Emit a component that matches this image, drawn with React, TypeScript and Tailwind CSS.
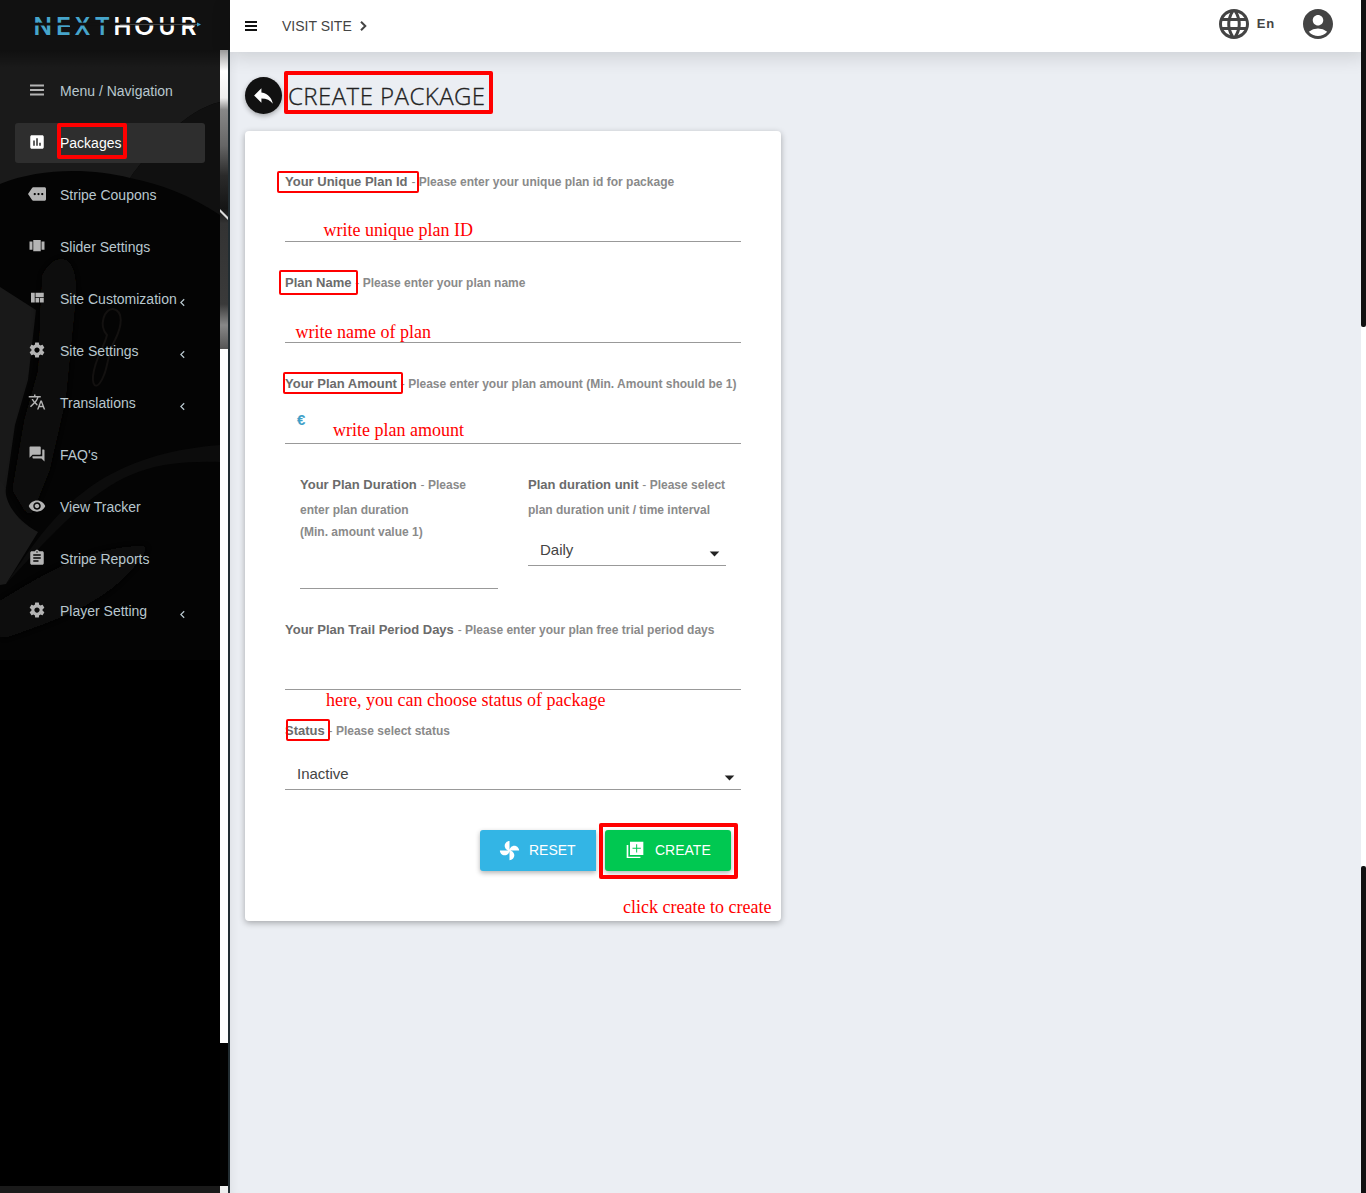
import React from "react";
import {
  MdAssessment, MdMore, MdTranslate, MdForum, MdVisibility, MdAssignment,
  MdLanguage, MdAccountCircle, MdReply, MdChevronLeft, MdArrowDropDown,
} from "react-icons/md";

type IconType = React.ComponentType<{ className?: string }>;

function glyph(d: string): IconType {
  return function Glyph({ className }) {
    return (
      <svg viewBox="0 0 24 24" fill="currentColor" className={className}>
        <path d={d} />
      </svg>
    );
  };
}

const Quilt = glyph("M10 18h5v-6h-5v6zm-6 0h5V5H4v13zm12 0h5v-6h-5v6zM10 5v6h11V5H10z");
const Carousel = glyph("M7 19h10V4H7v15zm-5-2h4V6H2v11zM18 6v11h4V6h-4z");
const Bars = glyph("M2.7 4.700h18.6v2.700H2.7zM2.7 10.700h18.6v2.700H2.7zM2.7 16.700h18.6v2.700H2.7z");
const Fan = glyph(
  "M12 12c0-3 2.5-5.5 5.5-5.5S23 9 23 12H12zm0 0c0 3-2.5 5.5-5.5 5.5S1 15 1 12h11zm0 0c-3 0-5.5-2.5-5.5-5.5S9 1 12 1v11zm0 0c3 0 5.5 2.5 5.5 5.5S15 23 12 23V12z"
);
const AddBox = glyph(
  "M4 6H2v15.500h16.500V20H4V6zM22 2H6v16h16V2zM19 10.600h-4.400V15h-1.200v-4.400H9V9.400h4.400V5h1.200v4.400H19z"
);
const Gear = glyph(
  "M19.430 12.980c.04-.32.07-.64.07-.98s-.03-.66-.07-.98l2.110-1.650c.19-.15.24-.42.12-.64l-2-3.460c-.12-.22-.39-.3-.61-.22l-2.490 1c-.52-.4-1.080-.73-1.690-.98l-.38-2.650C14.460 2.180 14.250 2 14 2h-4c-.25 0-.46.18-.49.42l-.38 2.650c-.61.25-1.170.59-1.690.98l-2.490-1c-.23-.09-.49 0-.61.22l-2 3.460c-.13.22-.07.49.12.64l2.110 1.650c-.04.32-.07.65-.07.98s.03.66.07.98l-2.110 1.650c-.19.15-.24.42-.12.64l2 3.460c.12.22.39.3.61.22l2.490-1c.52.4 1.080.73 1.690.98l.38 2.650c.03.24.24.42.49.42h4c.25 0 .46-.18.49-.42l.38-2.650c.61-.25 1.170-.59 1.690-.98l2.490 1c.23.09.49 0 .61-.22l2-3.460c.12-.22.07-.49-.12-.64l-2.110-1.650zM12 15.500c-1.930 0-3.500-1.570-3.500-3.500s1.570-3.500 3.500-3.500 3.500 1.570 3.500 3.500-1.570 3.500-3.500 3.500z"
);

const items: { label: string; icon: IconType; arrow?: boolean; active?: boolean }[] = [
  { label: "Menu / Navigation", icon: Bars },
  { label: "Packages", icon: MdAssessment, active: true },
  { label: "Stripe Coupons", icon: MdMore },
  { label: "Slider Settings", icon: Carousel },
  { label: "Site Customization", icon: Quilt, arrow: true },
  { label: "Site Settings", icon: Gear, arrow: true },
  { label: "Translations", icon: MdTranslate, arrow: true },
  { label: "FAQ's", icon: MdForum },
  { label: "View Tracker", icon: MdVisibility },
  { label: "Stripe Reports", icon: MdAssignment },
  { label: "Player Setting", icon: Gear, arrow: true },
];

function Logo() {
  const letters: [string, number, number][] = [
    ["N", 33.5, 18.5], ["E", 56, 15], ["X", 74.5, 16], ["T", 94.5, 15.5],
    ["H", 113.5, 18], ["O", 134, 20.5], ["U", 158.5, 17], ["R", 180.5, 16],
  ];
  return (
    <svg width="230" height="50" viewBox="0 0 230 50" className="block">
      <g fontFamily="Inter" fontWeight="600" fontSize="24.5">
        {letters.map(([c, x, w], i) => (
          <text key={c} x={x} y="34.7" textLength={w} lengthAdjust="spacingAndGlyphs" fill={i < 4 ? "#46a5cb" : "#fff"}>{c}</text>
        ))}
      </g>
      <rect x="30" y="22.700" width="168" height="2.800" fill="#111" />
      <rect x="120" y="24" width="77" height="1" fill="#444" />
      <rect x="59" y="25.500" width="11" height="1.500" fill="#46a5cb" />
      <rect x="116" y="25.500" width="13" height="2" fill="#fff" />
      <rect x="183" y="25.500" width="10" height="2" fill="#fff" />
      <path d="M197 22.500l4 2-4 2z" fill="#40a0c8" />
    </svg>
  );
}

function SidebarPhoto() {
  return (
    <svg width="228" height="1143" viewBox="0 50 228 1143" className="absolute inset-0">
      <defs>
        <linearGradient id="shade" x1="0" y1="0" x2="0" y2="1">
          <stop offset="0" stopColor="#000" stopOpacity=".4" />
          <stop offset="1" stopColor="#000" stopOpacity="0" />
        </linearGradient>
        <linearGradient id="strip" x1="0" y1="0" x2="0" y2="1">
          <stop offset="0" stopColor="#999" />
          <stop offset=".07" stopColor="#fff" />
          <stop offset=".16" stopColor="#eee" />
          <stop offset=".2" stopColor="#888" />
          <stop offset=".32" stopColor="#666" />
          <stop offset=".42" stopColor="#2a2a2a" />
          <stop offset=".53" stopColor="#151515" />
          <stop offset=".58" stopColor="#333" />
          <stop offset=".85" stopColor="#3a3a3a" />
          <stop offset=".92" stopColor="#888" />
          <stop offset="1" stopColor="#555" />
        </linearGradient>
        <filter id="soft"><feGaussianBlur stdDeviation="5" /></filter>
      </defs>
      <rect y="50" width="220" height="1143" fill="#1a1a1a" />
      <path d="M0 184C40 168 90 168 130 178C150 150 185 110 220 102V1186H0V585L6 584L38 532C15 520 4 500 6 488L0 470Z" fill="#040404" />
      <path d="M130 178C150 150 185 110 220 102V215C190 195 160 184 130 178Z" fill="#101010" />
      <path d="M0 287L36 310L28 380L15 425L6 488L0 480Z" fill="#191919" />
      <g filter="url(#soft)">
        <path d="M42 275C55 250 80 250 76 300L66 400L50 470L30 520L12 490L24 420L38 370L40 310Z" fill="#0a0908" />
        <path d="M0 600C50 570 90 545 150 545C120 600 60 620 0 640Z" fill="#070707" />
      </g>
      <path d="M6 584C50 520 90 455 220 445V462C130 460 100 480 6 584Z" fill="#0c0c0c" />
      <path d="M107 335C98 325 105 308 113 309C124 311 122 326 115 340C108 352 108 366 104 375C98 390 92 388 93 376C95 358 104 348 107 335Z" fill="none" stroke="#131110" strokeWidth="2" />
      <rect y="1186" width="220" height="7" fill="#1a1a1a" />
      <rect y="660" width="220" height="526" fill="#000" />
      <rect x="220" y="50" width="8" height="299" fill="url(#strip)" />
      <path d="M220 209l8 8v3l-8-8z" fill="#ddd" />
      <rect x="220" y="349" width="8" height="694" fill="#fff" />
      <rect x="220" y="1043" width="8" height="143" fill="#020202" />
      <rect x="220" y="1186" width="8" height="7" fill="#eee" />
      <rect y="50" width="220" height="18" fill="url(#shade)" />
    </svg>
  );
}

function Label({ name, hint }: { name: string; hint: React.ReactNode }) {
  return (
    <div className="text-[12px] leading-[22px] font-bold text-[#8a8a8a]">
      <span className="mr-[0.5px] text-[13px] text-[#6b6b6b]">{name}</span> <span className="font-normal">-</span> {hint}
    </div>
  );
}

function Field({ name, hint, children }: { name: string; hint: string; children?: React.ReactNode }) {
  return (
    <div className="mb-[30px] flex h-[71px] flex-col border-b border-[#999]">
      <Label name={name} hint={hint} />
      {children}
    </div>
  );
}

function Mark({ className }: { className: string }) {
  return <div className={"absolute rounded-[2px] border-[#f00] " + className} />;
}

function Note({ className, children }: { className: string; children: string }) {
  return (
    <div className={"absolute whitespace-nowrap font-['Liberation_Serif',serif] text-[18px] leading-[20px] text-[#f00] " + className}>
      {children}
    </div>
  );
}

export default function App() {
  return (
    <div className="relative flex h-[1193px] w-[1366px] overflow-hidden bg-[#ebeef3] font-['Liberation_Sans',Arial,sans-serif]">
      <aside className="flex w-[230px] shrink-0 flex-col bg-[#222d32]">
        <div className="h-[50px] bg-[#111]"><Logo /></div>
        <div className="relative flex-1">
          <SidebarPhoto />
          <nav className="relative flex flex-col gap-3 pt-[21px] pl-[15px]">
            {items.map(({ label, icon: Icon, arrow, active }) => (
              <div
                key={label}
                className={
                  "flex h-10 w-[190px] items-center rounded-[3px] pl-[13px] text-[14px] " +
                  (active ? "bg-[#2e2e2e] text-white" : "text-[#b8c7ce]")
                }
              >
                <Icon className={"-mt-[3px] mr-[14px] size-[18px] shrink-0 " + (active ? "text-white" : "text-[#b4b4b4]")} />
                <span className="w-[115px] whitespace-nowrap">{label}</span>
                {arrow && <MdChevronLeft className="mt-[7px] size-[15px] shrink-0" />}
              </div>
            ))}
          </nav>
        </div>
      </aside>

      <div className="flex min-w-0 flex-1 flex-col">
        <header className="flex h-[52px] items-center bg-white text-[#444] shadow-[0_4px_20px_rgba(0,0,0,0.14)]">
          <div className="ml-[15px] flex h-[10px] w-3 flex-col justify-between">
            <div className="h-[2px] bg-[#111]" />
            <div className="h-[2px] bg-[#111]" />
            <div className="h-[2px] bg-[#111]" />
          </div>
          <span className="ml-[25px] text-[14px]">VISIT SITE</span>
          <svg viewBox="0 0 8 10" className="ml-[8px] h-[10px] w-2" fill="none" stroke="#444" strokeWidth="2">
            <path d="M1 .8L5.300 5L1 9.200" />
          </svg>
          <div className="ml-auto flex items-center pb-1">
            <MdLanguage className="size-9" />
            <span className="ml-[5px] text-[13px] font-bold tracking-[0.8px]">En</span>
            <MdAccountCircle className="mr-[30px] ml-[25px] size-9" />
          </div>
        </header>

        <main className="flex flex-1 flex-col pl-[15px] shadow-[inset_8px_0_8px_-6px_rgba(0,0,0,0.06)]">
          <div className="mt-[25px] flex h-[37px] items-center">
            <div className="flex size-[37px] items-center justify-center rounded-full bg-[#111] text-white shadow-[0_2px_5px_rgba(0,0,0,0.3)]">
              <MdReply className="size-[25px]" />
            </div>
            <h1 className="ml-[6px] font-['Open_Sans'] text-[24px] font-light tracking-[0.45px] text-[#222] [-webkit-text-stroke:0.3px_#222]">CREATE PACKAGE</h1>
          </div>

          <section className="mt-[17px] h-[790px] w-[536px] rounded-[4px] bg-white px-10 pt-10 shadow-[0_2px_6px_rgba(0,0,0,0.3)]">
            <Field name="Your Unique Plan Id" hint="Please enter your unique plan id for package" />
            <Field name="Plan Name" hint="Please enter your plan name" />
            <Field name="Your Plan Amount" hint="Please enter your plan amount (Min. Amount should be 1)">
              <span className="mt-[15px] ml-3 text-[15px] leading-[20px] font-bold text-[#40a0c8]">€</span>
            </Field>

            <div className="mb-[30px] flex items-start gap-[30px] px-[15px]">
              <div className="h-[115px] w-[198px] border-b border-[#999] text-[12px] font-bold text-[#8a8a8a]">
                <Label name="Your Plan Duration" hint="Please" />
                <div className="pt-[3px] leading-[22px]">enter plan duration<br />(Min. amount value 1)</div>
              </div>
              <div className="h-[92px] w-[198px] border-b border-[#999] text-[12px] font-bold text-[#8a8a8a]">
                <Label name="Plan duration unit" hint="Please select" />
                <div className="pt-[3px] leading-[22px]">plan duration unit / time interval</div>
                <div className="mt-[13px] flex items-center justify-between pl-3 text-[15px] leading-[22px] font-normal text-[#444]">
                  Daily <MdArrowDropDown className="mt-[8px] size-[23px] text-[#222]" />
                </div>
              </div>
            </div>

            <Field name="Your Plan Trail Period Days" hint="Please enter your plan free trial period days" />
            <div className="flex h-[70px] flex-col border-b border-[#999]">
              <Label name="Status" hint="Please select status" />
              <div className="mt-[16px] flex items-center justify-between pl-3 text-[15px] leading-[22px] text-[#444]">
                Inactive <MdArrowDropDown className="mt-[8px] size-[23px] text-[#222]" />
              </div>
            </div>

            <div className="mt-10 flex h-[41px] justify-end gap-[9px] pr-[10px] text-[14px] text-white">
              <div className="flex w-[116px] items-center rounded-l-[3px] bg-[#33b5e5] pl-[19px] shadow-[0_2px_5px_rgba(0,0,0,0.3)]">
                <Fan className="-mt-px mr-[9px] size-[21px]" />RESET
              </div>
              <div className="flex w-[126px] items-center rounded-[3px] bg-[#00c851] pl-5 shadow-[0_2px_5px_rgba(0,0,0,0.3)]">
                <AddBox className="-mt-px mr-[10px] size-[20px]" />CREATE
              </div>
            </div>
          </section>
        </main>
      </div>

      <div className="absolute top-0 right-0 flex h-full w-[5px] flex-col bg-white">
        <div className="h-[327px] rounded-b-[2px] bg-[#111]" />
        <div className="mt-[539px] flex-1 rounded-t-[2px] bg-[#111]" />
      </div>

      <Mark className="top-[123px] left-[57px] h-[36px] w-[70px] border-4" />
      <Mark className="top-[71px] left-[284px] h-[43px] w-[209px] border-4" />
      <Mark className="top-[171px] left-[277px] h-[22px] w-[142px] border-2" />
      <Mark className="top-[270px] left-[279px] h-[25px] w-[79px] border-2" />
      <Mark className="top-[372px] left-[283px] h-[22px] w-[120px] border-2" />
      <Mark className="top-[719px] left-[286px] h-[22px] w-[44px] border-2" />
      <Mark className="top-[823px] left-[599px] h-[56px] w-[139px] border-4" />

      <Note className="top-[220px] left-[323.5px]">write unique plan ID</Note>
      <Note className="top-[322px] left-[295.5px]">write name of plan</Note>
      <Note className="top-[420px] left-[333px]">write plan amount</Note>
      <Note className="top-[690px] left-[326px]">here, you can choose status of package</Note>
      <Note className="top-[897px] left-[623px]">click create to create</Note>
    </div>
  );
}
